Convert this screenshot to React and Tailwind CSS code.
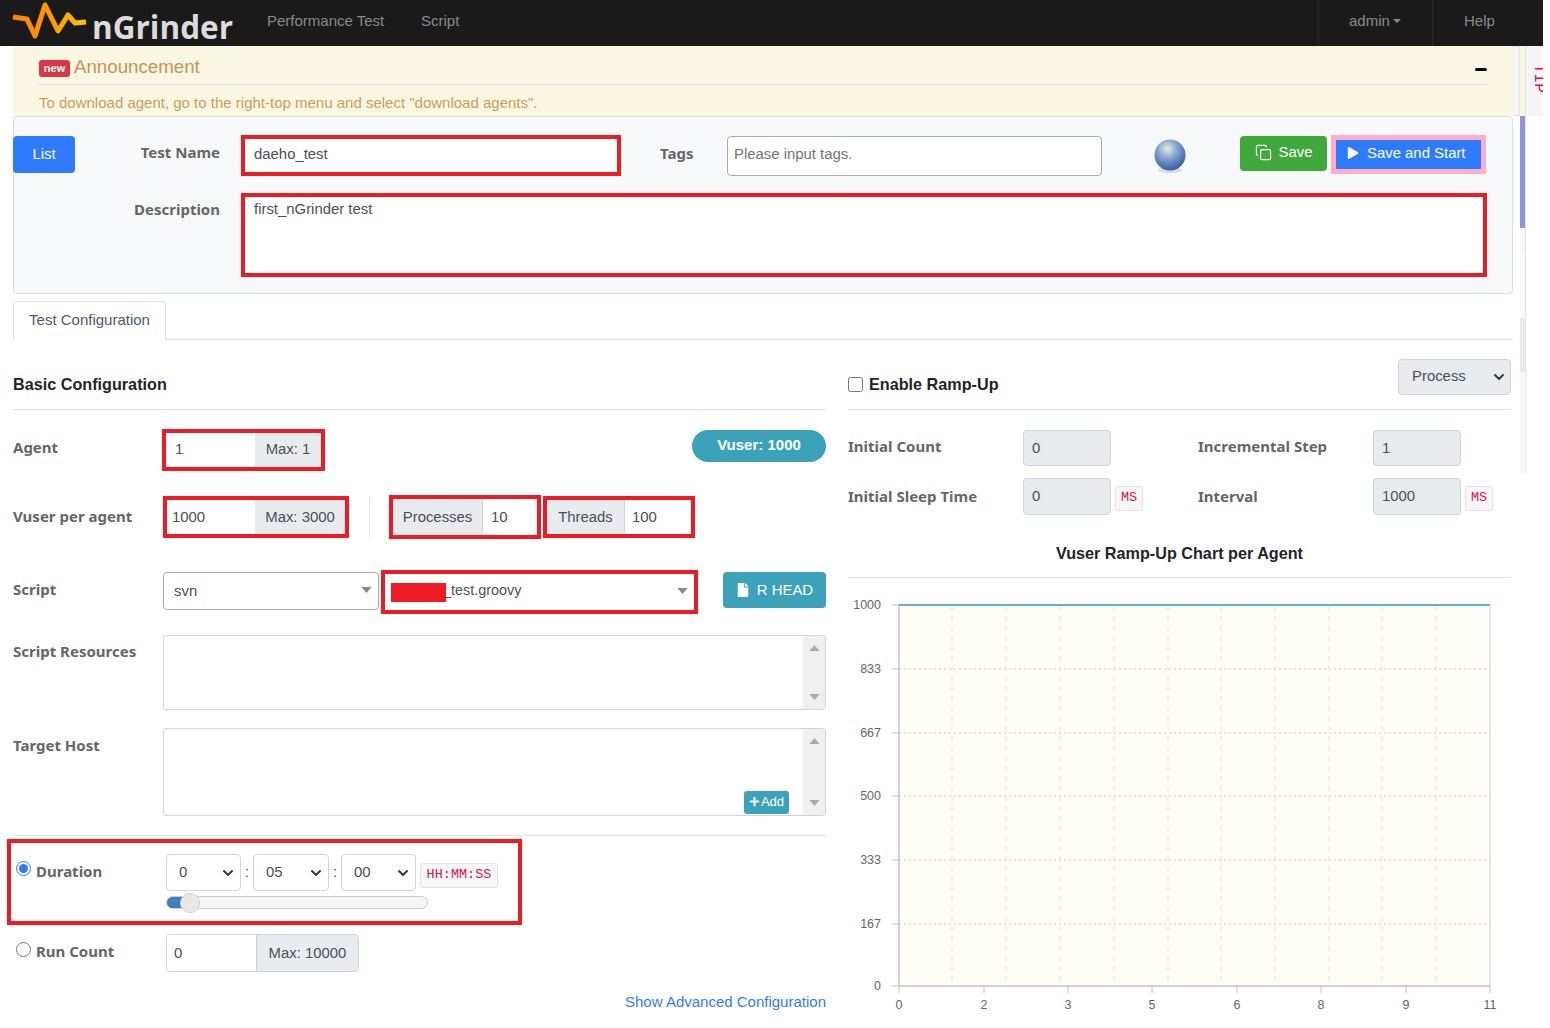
import React from "react";
import { Copy, ChevronDown } from "lucide-react";
import { FaFile, FaPlay, FaPlus } from "react-icons/fa";

const labelCls = "font-['Noto_Sans'] font-bold text-[#666] text-[15px]";
const fieldCls = "flex items-center bg-white text-[#495057] h-full";
const addonCls = "flex items-center justify-center bg-[#e9ecef] text-[#495057] h-full";

const Tri = ({ className = "" }) => (
  <svg viewBox="0 0 12 7" className={`w-[11px] h-[6px] fill-[#888] ${className}`}>
    <polygon points="0,0 12,0 6,7" />
  </svg>
);

const Scroll = () => (
  <div className="w-[22px] h-full bg-[#f0f0f0] flex flex-col items-center justify-between py-[9px]">
    <Tri className="rotate-180 fill-[#aaa]" />
    <Tri className="fill-[#aaa]" />
  </div>
);

const Bs = ({ value, w }) => (
  <div className={`${w} h-[37px] border border-[#ced4da] rounded flex items-center justify-between pl-3 pr-[4px] bg-white text-[#495057]`}>
    {value}
    <ChevronDown size={16} strokeWidth={3} className="text-[#343a40]" />
  </div>
);

const Code = ({ children, className = "" }) => (
  <code className={`flex items-center justify-center bg-[#f7f7f9] border border-[#e1e1e8] rounded-[3px] text-[#d14] font-['Liberation_Mono'] text-[13.5px] ${className}`}>
    {children}
  </code>
);

const ChartSvg = () => {
  const hs = [669, 733, 796, 860, 924];
  const vs = [952, 1006, 1060, 1114, 1168, 1221, 1275, 1329, 1382, 1436];
  const yl = [[605, "1000"], [669, "833"], [733, "667"], [796, "500"], [860, "333"], [924, "167"], [986, "0"]];
  const xl = [[899, "0"], [984, "2"], [1068, "3"], [1152, "5"], [1237, "6"], [1321, "8"], [1406, "9"], [1490, "11"]];
  return (
    <svg viewBox="848 578 663 442" className="w-[663px] h-[442px] block">
      <rect x="899" y="605" width="591" height="381" fill="#fffdf6" />
      {vs.map(x => <line key={x} x1={x} x2={x} y1="606" y2="986" stroke="#e6e3df" strokeDasharray="5 5" />)}
      {hs.map(y => <line key={y} x1="899" x2="1490" y1={y} y2={y} stroke="#dcdad6" strokeWidth="1.5" strokeDasharray="2 3" />)}
      <line x1="899" x2="899" y1="605" y2="986" stroke="#c4c4c4" strokeWidth="1.5" />
      <line x1="1490" x2="1490" y1="605" y2="986" stroke="#d0d0d0" />
      <line x1="899" x2="1490" y1="986" y2="986" stroke="#c0c0c0" strokeWidth="1.5" />
      <line x1="899" x2="1490" y1="605" y2="605" stroke="#5fb3c6" strokeWidth="2" />
      {yl.map(([y, t]) => (
        <g key={t}>
          <line x1="892" x2="899" y1={y} y2={y} stroke="#c0c0c0" />
          <text x="881" y={y + 4} textAnchor="end" fontSize="12.5" fill="#666" fontFamily="Liberation Sans">{t}</text>
        </g>
      ))}
      {xl.map(([x, t]) => (
        <g key={t}>
          <line x1={x} x2={x} y1="986" y2="993" stroke="#c0c0c0" />
          <text x={x} y="1009" textAnchor="middle" fontSize="12.5" fill="#666" fontFamily="Liberation Sans">{t}</text>
        </g>
      ))}
    </svg>
  );
};

export default function App() {
  return (
    <div className="w-[1550px] h-[1028px] overflow-hidden bg-white font-['Liberation_Sans'] text-[14.9px] text-[#495057]">
      {/* Navbar */}
      <nav className="w-[1543px] h-[46px] bg-[#1a1a1a] flex items-center text-[#8a8a8a] text-[15px]">
        <svg viewBox="0 0 92 46" className="w-[92px] h-[46px] shrink-0">
          <defs>
            <linearGradient id="logo" x1="0" x2="1" y1="0" y2="0">
              <stop offset="0" stopColor="#ff8400" />
              <stop offset="0.5" stopColor="#ff9800" />
              <stop offset="1" stopColor="#ffc400" />
            </linearGradient>
          </defs>
          <polyline points="13,17 27,19 35,36 45,5 58,31 68,15 75,23 86,22" fill="none" stroke="url(#logo)" strokeWidth="5" strokeLinejoin="round" />
        </svg>
        <span className="font-['Open_Sans'] font-bold text-[31.5px] text-[#dcdcdc] leading-none mt-[7px] w-[175px]">nGrinder</span>
        <span className="w-[154px] mb-[4px]">Performance Test</span>
        <span className="mb-[4px]">Script</span>
        <div className="ml-auto flex h-full">
          <div className="w-[114px] border-l border-[#2a2a2a] flex items-center pl-[30px] pb-[4px]">
            admin
            <span className="ml-[3px] border-x-[4px] border-x-transparent border-t-[4px] border-t-[#8a8a8a]" />
          </div>
          <div className="w-[111px] border-l border-[#2a2a2a] flex items-center pl-[31px] pb-[4px]">Help</div>
        </div>
      </nav>

      <div className="flex">
        <main className="w-[1500px] ml-[13px] shrink-0">
          {/* Announcement */}
          <section className="h-[70px] w-[1500px] bg-[#f9f7e1] rounded-b pl-[26px] pr-[26px] text-[#c09853]">
            <div className="h-[39px] border-b border-[#dfe0e0] flex items-center">
              <span className="bg-[#dc3545] text-white font-bold text-[11px] leading-none rounded-[3px] w-[31px] h-[17px] flex items-center justify-center mt-[7px] mr-1">new</span>
              <span className="text-[18.7px] mt-[4px]">Announcement</span>
              <span className="ml-auto w-[12px] h-[3px] bg-black rounded-full mt-[8px]" />
            </div>
            <p className="mt-[8px] text-[15px] leading-[20px] opacity-90">To download agent, go to the right-top menu and select "download agents".</p>
          </section>

          {/* Test header */}
          <section className="h-[178px] bg-[#f7f9fb] border border-[#dcdcdc] rounded pt-[18px] -mb-px">
            <div className="flex h-[41px]">
              <button className="-ml-px mt-[1px] w-[62px] h-[37px] bg-[#2e7bff] text-white rounded">List</button>
              <label className={`${labelCls} w-[145px] text-right leading-[34px]`}>Test Name</label>
              <div className="ml-[21px] w-[380px] border-4 border-[#ed1c24] bg-white flex items-center pl-[9px] pb-[2px]">daeho_test</div>
              <label className={`${labelCls} ml-[39px] w-[67px] leading-[36px]`}>Tags</label>
              <input placeholder="Please input tags." className="w-[375px] h-[40px] mt-[1px] pb-[4px] border border-[#aaa] rounded bg-white px-[6px] outline-none placeholder:text-[#6c757d]" />
              <svg viewBox="0 0 40 44" className="ml-[48px] w-[40px] h-[44px] shrink-0">
                <defs>
                  <radialGradient id="ball" cx="0.42" cy="0.3" r="0.7">
                    <stop offset="0" stopColor="#e8ecd8" />
                    <stop offset="0.45" stopColor="#83a5d3" />
                    <stop offset="1" stopColor="#33609f" />
                  </radialGradient>
                </defs>
                <ellipse cx="20" cy="35" rx="12" ry="3" fill="#bbb" opacity="0.5" />
                <circle cx="20" cy="20" r="15.5" fill="url(#ball)" />
              </svg>
              <button className="ml-[50px] mt-[1px] w-[87px] h-[35px] pb-[2px] bg-[#41a83e] rounded text-white flex items-center justify-center gap-[7px]">
                <Copy size={17} strokeWidth={1.6} />Save
              </button>
              <button className="ml-[4px] w-[155px] h-[39px] pb-[3px] bg-[#2e7bff] border-[5px] border-[#ffaec9] text-white flex items-center pl-[11px] gap-[8px]">
                <FaPlay size={12} />Save and Start
              </button>
            </div>
            <div className="flex mt-[17px] h-[84px]">
              <label className={`${labelCls} w-[206px] text-right leading-[32px]`}>Description</label>
              <div className="ml-[21px] w-[1246px] border-4 border-[#ed1c24] bg-white pl-[9px] leading-[20px] pt-[2px]">first_nGrinder test</div>
            </div>
          </section>

          {/* Tabs */}
          <div className="mt-[8px] h-[39px] border-b border-[#dee2e6] flex">
            <div className="w-[153px] h-[39px] pb-[2px] border border-b-0 border-[#dee2e6] rounded-t bg-white flex items-center justify-center text-[#495a6b] text-[15px]">Test Configuration</div>
          </div>

          <div className="flex gap-[22px]">
            {/* Basic configuration */}
            <div className="w-[813px] shrink-0">
              <div className="h-[70px] border-b border-[#dee2e6] flex items-end pb-[13px] font-bold text-[#212529] text-[16.2px]">Basic Configuration</div>

              <div className="flex items-center mt-[19px] h-[42px]">
                <label className={`${labelCls} w-[149px] -mt-[6px]`}>Agent</label>
                <div className="w-[163px] h-full border-4 border-[#ed1c24] flex">
                  <div className={`${fieldCls} w-[89px] pl-[9px] pb-[2px]`}>1</div>
                  <div className={`${addonCls} flex-1 pb-[2px]`}>Max: 1</div>
                </div>
                <div className="ml-auto w-[134px] h-[32px] -mt-[9px] rounded-full bg-[#3ca2ba] text-white font-bold flex items-center justify-center text-[15px]">Vuser: 1000</div>
              </div>

              <div className="flex items-center mt-[25px] h-[42px]">
                <label className={`${labelCls} w-[150px] -mt-[2px]`}>Vuser per agent</label>
                <div className="w-[186px] h-full border-4 border-[#ed1c24] flex">
                  <div className={`${fieldCls} w-[88px] pl-[5px]`}>1000</div>
                  <div className={`${addonCls} flex-1`}>Max: 3000</div>
                </div>
                <div className="ml-[20px] w-px h-[40px] bg-[#dee2e6]" />
                <div className="ml-[19px] w-[152px] h-[44px] border-4 border-[#ed1c24] flex">
                  <div className={`${addonCls} w-[90px] border-r border-[#ced4da]`}>Processes</div>
                  <div className={`${fieldCls} flex-1 pl-2`}>10</div>
                </div>
                <div className="ml-[2px] w-[152px] h-full border-4 border-[#ed1c24] flex">
                  <div className={`${addonCls} w-[78px] border-r border-[#ced4da]`}>Threads</div>
                  <div className={`${fieldCls} flex-1 pl-[7px]`}>100</div>
                </div>
              </div>

              <div className="flex items-center mt-[32px] h-[44px]">
                <label className={`${labelCls} w-[150px] -mt-[6px]`}>Script</label>
                <div className="w-[216px] h-[38px] -mt-[2px] border border-[#aaa] rounded flex items-center justify-between pl-[10px] pr-[6px] bg-white">
                  svn<Tri className="-mt-[3px]" />
                </div>
                <div className="ml-[2px] w-[317px] h-full border-4 border-[#ed1c24] flex items-center pl-[6px] pr-[6px] bg-white text-[14.4px]">
                  <span className="w-[55px] h-[19px] bg-[#ed1c24]" />
                  <span className="-mt-[2px] -ml-[3px]">_test.groovy</span>
                  <Tri className="ml-auto -mt-[3px]" />
                </div>
                <button className="ml-[25px] w-[103px] h-[36px] -mt-[4px] bg-[#3ca2ba] text-white rounded flex items-center justify-center gap-[7px]">
                  <FaFile size={14} />R HEAD
                </button>
              </div>

              <div className="flex mt-[21px] h-[75px]">
                <label className={`${labelCls} w-[150px] mt-[5px]`}>Script Resources</label>
                <div className="w-[663px] h-full border border-[#d5d5d5] rounded-[3px] bg-white flex justify-end overflow-hidden"><Scroll /></div>
              </div>

              <div className="flex mt-[18px] h-[88px]">
                <label className={`${labelCls} w-[150px] mt-[6px]`}>Target Host</label>
                <div className="relative w-[663px] h-full border border-[#d5d5d5] rounded-[3px] bg-white flex justify-end overflow-hidden">
                  <Scroll />
                  <button className="absolute right-[36px] bottom-[1px] w-[45px] h-[23px] pb-[2px] bg-[#3ca2ba] text-white text-[13px] rounded-[3px] flex items-center justify-center gap-[1px]">
                    <FaPlus size={11} />Add
                  </button>
                </div>
              </div>

              <div className="mt-[19px] border-t border-[#dee2e6]" />

              <div className="mt-[3px] -ml-[6px] w-[515px] h-[86px] border-4 border-[#ed1c24] pt-[11px] flex">
                <div className={`w-[155px] flex items-start pl-[5px] pt-[6px] gap-[5px] ${labelCls}`}>
                  <input type="radio" name="mode" defaultChecked className="w-[15px] h-[15px] mt-[1px] accent-[#2e7bff]" />
                  <span className="leading-[20px] mt-[1px]">Duration</span>
                </div>
                <div>
                  <div className="flex items-center h-[37px]">
                    <Bs value="0" w="w-[75px]" />
                    <span className="w-[12px] text-center">:</span>
                    <Bs value="05" w="w-[76px]" />
                    <span className="w-[12px] text-center">:</span>
                    <Bs value="00" w="w-[75px]" />
                    <Code className="ml-[4px] w-[78px] h-[25px] mt-[6px]">HH:MM:SS</Code>
                  </div>
                  <div className="relative mt-[5px] w-[262px] h-[13px] bg-[#f5f5f5] border border-[#ccc] rounded-full">
                    <div className="w-[24px] h-full bg-[#3f7fbf] rounded-l-full" />
                    <span className="absolute left-[13px] -top-[4px] w-[20px] h-[20px] rounded-full bg-[#e8e8e8] border border-[#ccc]" />
                  </div>
                </div>
              </div>

              <div className="flex mt-[9px] h-[38px] -ml-[6px]">
                <div className={`w-[159px] flex items-start pl-[9px] pt-[7px] gap-[5px] ${labelCls}`}>
                  <input type="radio" name="mode" className="w-[15px] h-[15px] mt-[1px]" />
                  <span className="leading-[20px]">Run Count</span>
                </div>
                <div className="w-[193px] h-full border border-[#ced4da] rounded flex overflow-hidden">
                  <div className={`${fieldCls} w-[90px] pl-[7px] border-r border-[#ced4da]`}>0</div>
                  <div className={`${addonCls} flex-1`}>Max: 10000</div>
                </div>
              </div>

              <div className="mt-[21px] text-right text-[#2e7bff] text-[15px] leading-[18px]">Show Advanced Configuration</div>
            </div>

            {/* Ramp-up */}
            <div className="w-[663px] shrink-0">
              <div className="h-[70px] border-b border-[#dee2e6] flex items-start justify-between pt-[19px]">
                <div className="mt-[15px] h-[20px] flex items-center gap-[6px] font-bold text-[#212529] text-[16.2px]">
                  <input type="checkbox" className="w-[15px] h-[15px]" />Enable Ramp-Up
                </div>
                <div className="w-[113px] h-[36px] bg-[#e9ecef] border border-[#ced4da] rounded flex items-center justify-between pl-[13px] pr-[3px] pb-[1px]">
                  Process<ChevronDown size={16} strokeWidth={3} className="text-[#343a40]" />
                </div>
              </div>

              <div className="flex items-center mt-[20px] h-[36px]">
                <label className={`${labelCls} w-[175px] -mt-[4px]`}>Initial Count</label>
                <div className="w-[88px] h-full bg-[#e9ecef] border border-[#ced4da] rounded flex items-center pl-2">0</div>
                <label className={`${labelCls} ml-[87px] w-[175px] -mt-[4px]`}>Incremental Step</label>
                <div className="w-[88px] h-full bg-[#e9ecef] border border-[#ced4da] rounded flex items-center pl-2">1</div>
              </div>

              <div className="flex items-center mt-[12px] h-[37px]">
                <label className={`${labelCls} w-[175px]`}>Initial Sleep Time</label>
                <div className="w-[88px] h-full bg-[#e9ecef] border border-[#ced4da] rounded flex items-center pl-2">0</div>
                <div className="w-[87px] pl-[4px] pt-[3px]"><Code className="w-[28px] h-[25px]">MS</Code></div>
                <label className={`${labelCls} w-[175px]`}>Interval</label>
                <div className="w-[88px] h-full bg-[#e9ecef] border border-[#ced4da] rounded flex items-center pl-2">1000</div>
                <div className="pl-[4px] pt-[3px]"><Code className="w-[28px] h-[25px]">MS</Code></div>
              </div>

              <div className="mt-[28px] h-[35px] border-b border-[#dee2e6] text-center font-bold text-[#212529] text-[16.2px] leading-[20px]">Vuser Ramp-Up Chart per Agent</div>
              <ChartSvg />
            </div>
          </div>
        </main>

        {/* Right strip */}
        <aside className="flex h-[427px] shrink-0">
          <div className="w-[7px] h-[70px] bg-[#f5f5f9] border border-l-0 border-[#e4e4ea]" />
          <div className="w-[5px] flex flex-col">
            <div className="h-[70px] bg-[#f9f7e1]" />
            <div className="h-[112px] bg-[#9191dd]" />
            <div className="h-[24px] bg-[#f7f7f9]" />
            <div className="h-[66px] bg-[#fbfbfb]" />
            <div className="h-[54px] bg-[#ebebef]" />
            <div className="flex-1 bg-[#fafafa]" />
          </div>
          <div className="w-[18px] h-full border-l border-[#e0e0ee]">
            <div className="h-[70px] bg-[#f5f5f9] overflow-hidden pl-[5px] pt-[18px]">
              <span className="block font-['Liberation_Mono'] text-[16px] text-[#d14] leading-none [writing-mode:vertical-rl]">TIP</span>
            </div>
          </div>
        </aside>
      </div>
    </div>
  );
}
